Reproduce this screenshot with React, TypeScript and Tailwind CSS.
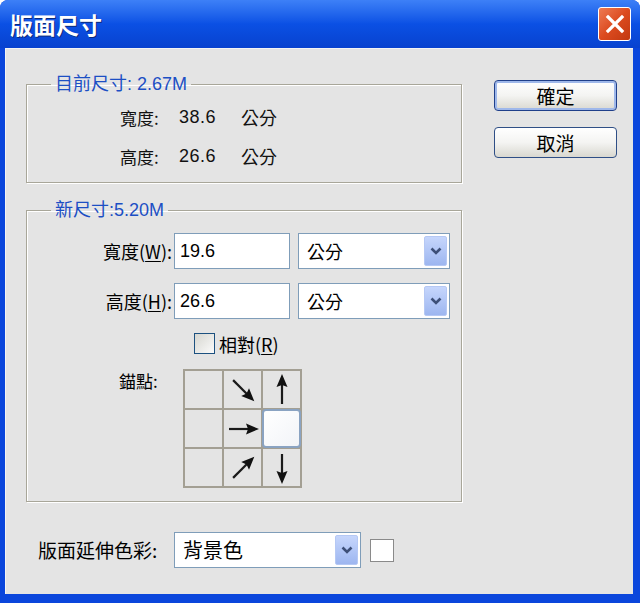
import React from 'react'

const cjk = "font-['Noto_Sans_CJK_TC','Noto_Sans_CJK_SC',sans-serif]"
const mixed = "font-['Liberation_Sans','Noto_Sans_CJK_TC',sans-serif]"

function Chevron() {
  return (
    <svg width="12" height="9" viewBox="0 0 12 9">
      <path d="M1.5 1.5 L6 6 L10.5 1.5" fill="none" stroke="#3d4f78" strokeWidth="2.6" />
    </svg>
  )
}

function Select({ value, width, textSize = 'text-[18px]' }: { value: string; width: string; textSize?: string }) {
  return (
    <div className={`${width} h-[36px] bg-white border border-[#7f9db9] flex items-center justify-between pl-[8px] pr-[2px]`}>
      <span className={`${cjk} ${textSize} text-black leading-none`}>{value}</span>
      <div className="w-[23px] h-[30px] rounded-[2px] border border-[#b5c8f4] bg-gradient-to-b from-[#c6d6fc] to-[#9db6f0] flex items-center justify-center">
        <Chevron />
      </div>
    </div>
  )
}

function Arrow({ rotate }: { rotate: number }) {
  return (
    <svg width="36" height="36" viewBox="0 0 36 36">
      <g transform={`rotate(${rotate} 18 18)`}>
        <line x1="4" y1="18" x2="25" y2="18" stroke="#1a1a1a" strokeWidth="2.2" />
        <polygon points="21,12.5 34,18 21,23.5 23,18" fill="#111" />
      </g>
    </svg>
  )
}

function Fieldset({ title, className, children }: { title: string; className: string; children: React.ReactNode }) {
  return (
    <fieldset className={`w-[436px] border border-[#a8a699] shadow-[inset_1px_1px_0_#fff,1px_1px_0_#fff] ${className}`}>
      <legend className={`ml-[24px] px-[4px] ${mixed} text-[18px] leading-[24px] text-[#1c4fc4]`}>{title}</legend>
      {children}
    </fieldset>
  )
}

export default function App() {
  const cells: (number | null | 'anchor')[] = [null, 45, -90, null, 0, 'anchor', null, -45, 90]

  return (
    <div className="w-[640px] h-[603px] bg-white">
      <div className="w-[640px] h-[603px] rounded-t-[8px] bg-[#0a46dc] flex flex-col pl-[5px] pr-[7px] pb-[9px]">
        {/* title bar */}
        <div className="h-[48px] -ml-[5px] -mr-[7px] rounded-t-[8px] bg-gradient-to-b from-[#3d80f7] via-[#0b50e4] to-[#0842cf] flex items-center justify-between pl-[10px] pr-[9px]">
          <span className={`${cjk} font-bold text-[23px] text-white [text-shadow:1px_1px_0_#0b2a7c]`}>版面尺寸</span>
          <div className="w-[33px] h-[34px] rounded-[3px] border border-white bg-gradient-to-br from-[#ee7a52] via-[#dc4b1f] to-[#c2380f] flex items-center justify-center">
            <svg width="20" height="20" viewBox="0 0 20 20">
              <path d="M3 3 L17 17 M17 3 L3 17" stroke="#fff" strokeWidth="3.2" strokeLinecap="square" />
            </svg>
          </div>
        </div>

        {/* body */}
        <div className="flex-1 bg-[#e4e4e4] border-t border-l border-[#f4f4f4] relative">
          <div className="flex pl-[20px] pt-[23px]">
            <div className="flex flex-col">
              <Fieldset title="目前尺寸: 2.67M" className="h-[111px]">
                <div className={`${cjk} text-[17px] text-[#111] pt-[2px]`}>
                  {[['寬度:', '38.6'], ['高度:', '26.6']].map(([l, v]) => (
                    <div key={l} className="h-[39px] flex items-center">
                      <span className="ml-[93px] w-[59px]">{l}</span>
                      <span className={`${mixed} text-[18px] w-[62px] tracking-[0.5px]`}>{v}</span>
                      <span className="text-[18px]">公分</span>
                    </div>
                  ))}
                </div>
              </Fieldset>

              <Fieldset title="新尺寸:5.20M" className="h-[304px] mt-[15px]">
                <div className="pt-[11px] flex flex-col">
                  {[['寬度(', 'W', '):', '19.6'], ['高度(', 'H', '):', '26.6']].map(([a, k, b, v], i) => (
                    <div key={k} className={`flex items-center ${i ? 'mt-[14px]' : ''}`}>
                      <span className={`${cjk} w-[145px] text-right text-[18px] text-black`}>
                        {a}<span className="underline underline-offset-2">{k}</span>{b}
                      </span>
                      <div className="ml-[2px] w-[116px] h-[36px] bg-white border border-[#7f9db9] flex items-center pl-[5px]">
                        <span className={`${mixed} text-[18px] text-black`}>{v}</span>
                      </div>
                      <div className="ml-[8px]">
                        <Select value="公分" width="w-[152px]" />
                      </div>
                    </div>
                  ))}

                  <div className="mt-[14px] ml-[167px] flex items-center gap-[4px]">
                    <div className="w-[21px] h-[21px] border border-[#1c5180] bg-gradient-to-br from-[#d6d6d0] to-[#fbfbfb]" />
                    <span className={`${cjk} text-[18px] text-black leading-none`}>
                      相對(<span className="underline underline-offset-2">R</span>)
                    </span>
                  </div>

                  <div className="mt-[15px] flex">
                    <span className={`${cjk} ml-[92px] w-[64px] text-[17px] text-black leading-none pt-[3px]`}>錨點:</span>
                    <div className="grid grid-cols-[repeat(3,37px)] grid-rows-[repeat(3,37px)] gap-[2px] p-[2px] bg-[#a39f93]">
                      {cells.map((c, i) =>
                        c === 'anchor' ? (
                          <div key={i} className="bg-[#e4e4e4] relative">
                            <div className="absolute -inset-[1px] rounded-[4px] border-2 border-[#8aa3c2] bg-gradient-to-br from-white to-[#f2f4f8]" />
                          </div>
                        ) : (
                          <div key={i} className="bg-[#e4e4e4] flex items-center justify-center">
                            {c !== null && <Arrow rotate={c} />}
                          </div>
                        )
                      )}
                    </div>
                  </div>
                </div>
              </Fieldset>
            </div>

            <div className="ml-[32px] pt-[8px] flex flex-col gap-[16px]">
              {['確定', '取消'].map((t, i) => (
                <button
                  key={t}
                  className={`w-[123px] h-[31px] rounded-[4px] border ${i ? 'border-[#2f4f86]' : 'border-[#1f3f8a] shadow-[inset_0_0_0_2px_#9fb8ea]'} bg-gradient-to-b from-white via-[#f4f4f2] to-[#d9d8d0] ${cjk} text-[19px] text-black leading-none`}
                >
                  {t}
                </button>
              ))}
            </div>
          </div>

          <div className="mt-[30px] flex items-center pl-[32px]">
            <span className={`${cjk} w-[136px] text-[19px] text-black`}>版面延伸色彩:</span>
            <Select value="背景色" width="w-[187px]" textSize="text-[20px]" />
            <div className="ml-[9px] w-[24px] h-[23px] bg-white border border-[#8a8a8a]" />
          </div>
        </div>
      </div>
    </div>
  )
}
